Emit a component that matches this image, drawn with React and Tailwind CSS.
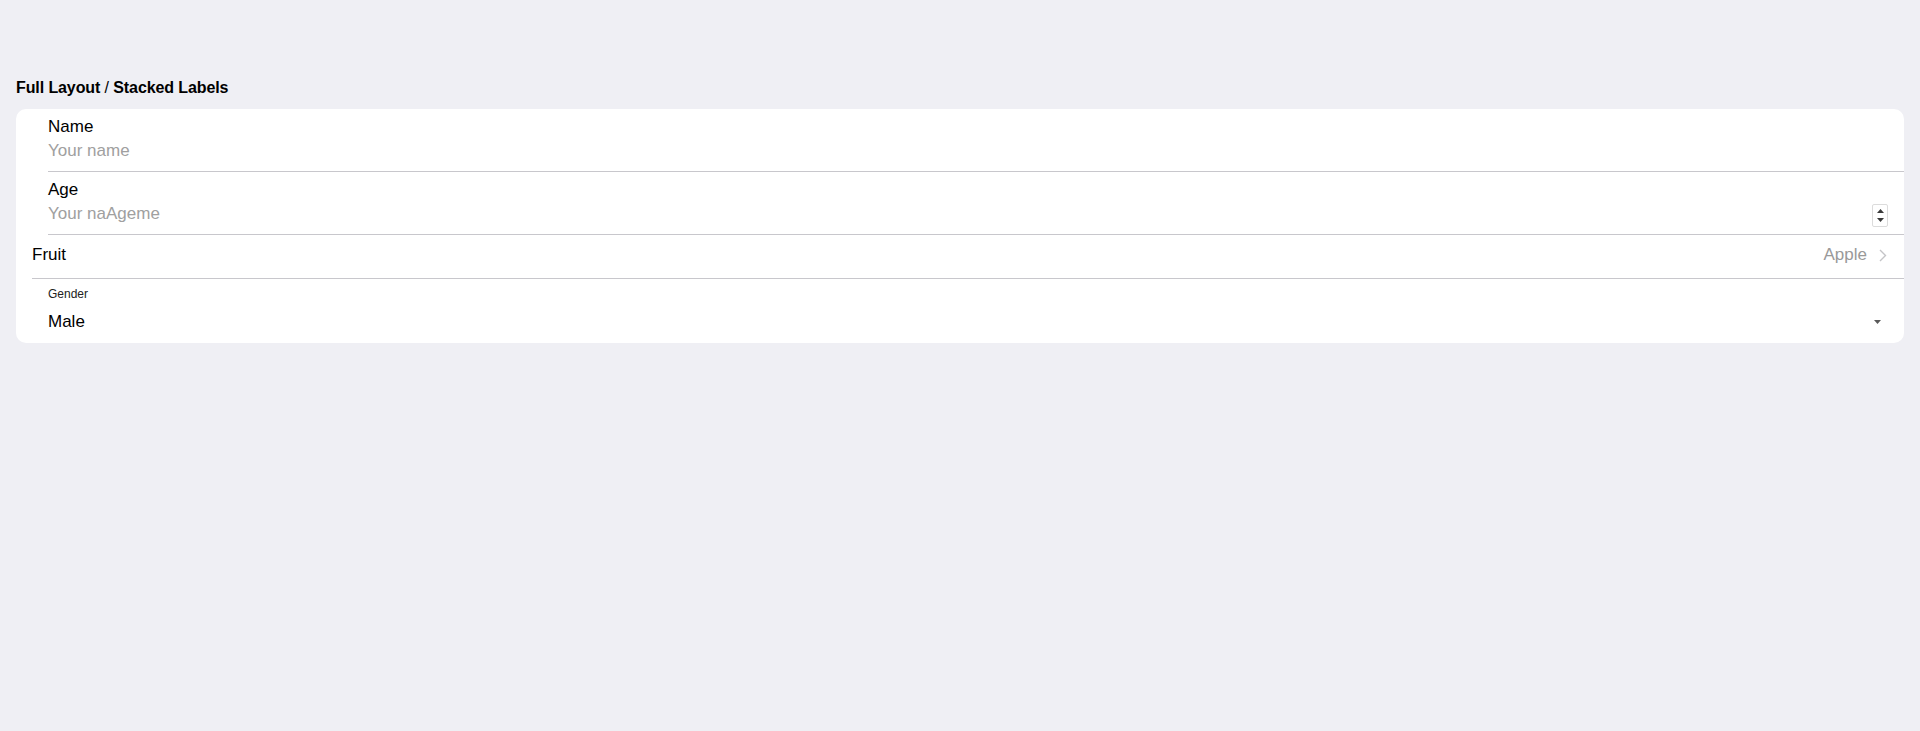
import React from "react";

const font = { fontFamily: '"Liberation Sans", Arial, sans-serif' };

const Spinner = () => (
  <div className="flex h-[23px] w-[16px] flex-col items-center justify-center gap-[5px] rounded-[2px] border border-[#dcdcdc] bg-white">
    <svg width="7" height="4" viewBox="0 0 7 4">
      <polygon points="3.5,0 7,4 0,4" fill="#3a3a3a" />
    </svg>
    <svg width="7" height="4" viewBox="0 0 7 4">
      <polygon points="0,0 7,0 3.5,4" fill="#3a3a3a" />
    </svg>
  </div>
);

const StackedItem = ({ label, placeholder, children, border = true }) => (
  <div className={"ml-[32px] flex items-end pr-4 " + (border ? "border-b border-[#c8c7cc]" : "")}>
    <div className="flex-1 pt-[8px] pb-[8px]">
      <div className="h-[20px] text-[17px] leading-[20px] text-black">{label}</div>
      <div className="mt-[2px] h-[24px] text-[17px] leading-[24px] text-[#a0a0a0]">{placeholder}</div>
    </div>
    {children}
  </div>
);

export default function App() {
  return (
    <div className="min-h-[731px] bg-[#efeff4] px-4 pt-[76px]" style={font}>
      <h1 className="mb-[9px] text-[16px] leading-6 font-bold tracking-[-0.1px] text-black">
        Full Layout <span className="font-normal">/</span> Stacked Labels
      </h1>

      <div className="overflow-hidden rounded-[10px] bg-white">
        {/* Name */}
        <StackedItem label="Name" placeholder="Your name" />

        {/* Age */}
        <StackedItem label="Age" placeholder="Your naAgeme">
          <div className="mb-[7px]">
            <Spinner />
          </div>
        </StackedItem>

        {/* Fruit */}
        <div className="ml-4 flex items-start border-b border-[#c8c7cc] pt-[10px] pb-[13px] pr-[17px]">
          <div className="flex-1 text-[17px] leading-[20px] text-black">Fruit</div>
          <div className="text-[17px] leading-[20px] text-[#999999]">Apple</div>
          <svg className="ml-[12px] mt-[4px]" width="8" height="13" viewBox="0 0 8 13">
            <polyline points="1,1 6.5,6.5 1,12" fill="none" stroke="#c4c4c7" strokeWidth="1.4" />
          </svg>
        </div>

        {/* Gender */}
        <div className="ml-[32px] flex items-end pr-[23px] pt-[7px] pb-[11px]">
          <div className="flex-1">
            <div className="h-[16px] text-[12px] leading-[16px] text-[#222]">Gender</div>
            <div className="mt-[10px] h-[20px] text-[17px] leading-[20px] text-black">Male</div>
          </div>
          <svg className="mb-[8px]" width="7" height="4" viewBox="0 0 7 4">
            <polygon points="0,0 7,0 3.5,4" fill="#5a5a5a" />
          </svg>
        </div>
      </div>
    </div>
  );
}
